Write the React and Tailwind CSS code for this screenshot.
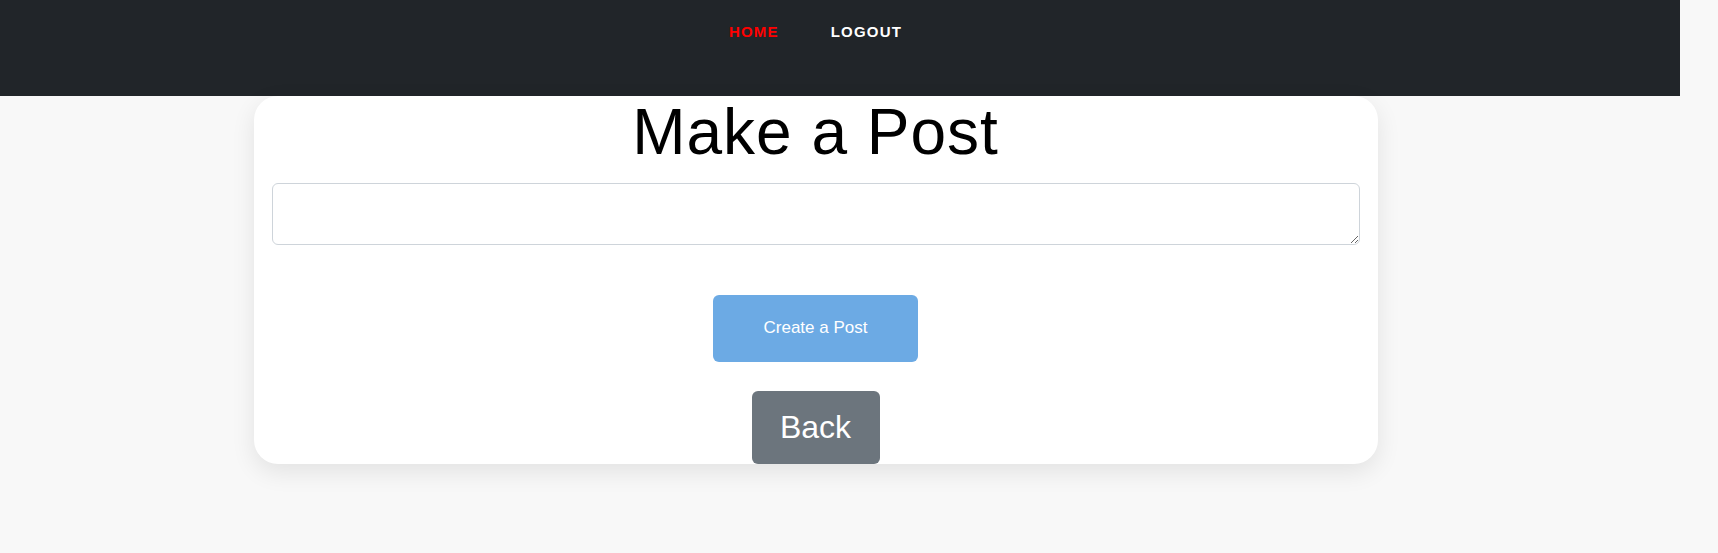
export default function App() {
  const sans = { fontFamily: '"Liberation Sans", Arial, sans-serif' };
  return (
    <div className="min-h-[553px] w-[1718px] bg-[#f8f8f8]" style={sans}>
      <nav className="h-[96px] w-[1680px] bg-[#212529]">
        <div className="flex w-[1631px] justify-center gap-[52px] pt-[23px] text-[15px] font-bold leading-[18px] tracking-[1.2px]">
          <a className="text-[#ff0000]">HOME</a>
          <a className="text-white">LOGOUT</a>
        </div>
      </nav>
      <div className="flex w-[1631px] justify-center">
        <div className="flex w-[1124px] flex-col items-center rounded-[24px] bg-white px-[18px] shadow-[0_8px_24px_rgba(0,0,0,0.09)]">
          <h1 className="text-[64px] font-normal leading-[1.15] tracking-[1px] text-black">Make a Post</h1>
          <textarea className="mt-[13px] block h-[62px] w-full rounded-[6px] border border-[#ced4da] bg-white px-3 py-2 outline-none" />
          <button className="mt-[50px] h-[67px] w-[205px] rounded-[6px] bg-[#6caae4] text-[17px] text-white">
            Create a Post
          </button>
          <button className="mt-[29px] h-[73px] w-[128px] rounded-[6px] bg-[#6c757d] text-[32px] text-white">
            Back
          </button>
        </div>
      </div>
    </div>
  );
}
